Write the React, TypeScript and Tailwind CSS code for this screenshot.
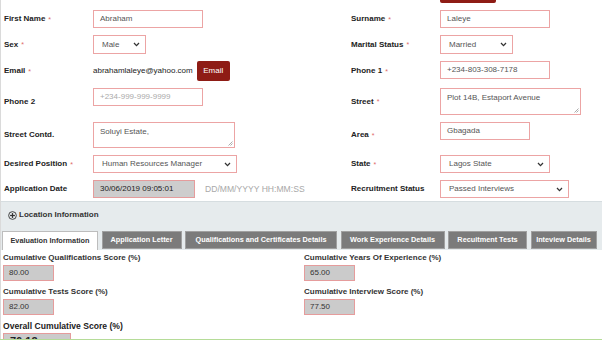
import type { ReactNode } from "react";

function Req() {
  return <span className="ml-[3px] text-[7px] font-normal text-[#e06a6a]">*</span>;
}

function Label({ text, req }: { text: string; req?: boolean }) {
  return (
    <div className="self-center flex items-center text-[8px] font-bold text-[#222] leading-none">
      {text}
      {req && <Req />}
    </div>
  );
}

function Chevron() {
  return (
    <svg width="7" height="5" viewBox="0 0 7 5" className="shrink-0">
      <polyline points="1,1 3.5,3.6 6,1" fill="none" stroke="#333" strokeWidth="1.3" />
    </svg>
  );
}

function Field({ w, h = "h-[18px]", children, muted }: { w: string; h?: string; children?: ReactNode; muted?: boolean }) {
  return (
    <div
      className={`self-start ${w} ${h} border border-[#eca4a4] bg-white flex items-center px-[6px] text-[8px] ${
        muted ? "text-[#aaa]" : "text-[#555]"
      }`}
    >
      {children}
    </div>
  );
}

function Select({ w, h = "h-[18px]", value }: { w: string; h?: string; value: string }) {
  return (
    <div
      className={`self-start ${w} ${h} border border-[#eca4a4] bg-white flex items-center justify-between pl-[8px] pr-[5px] text-[8px] text-[#555]`}
    >
      <span>{value}</span>
      <Chevron />
    </div>
  );
}

function TextArea({ w, h, value }: { w: string; h: string; value: string }) {
  return (
    <div className={`self-start relative ${w} ${h} border border-[#eca4a4] bg-white px-[6px] pt-[3px] text-[8px] text-[#555]`}>
      {value}
      <svg width="5" height="5" viewBox="0 0 5 5" className="absolute right-[1px] bottom-[1px]">
        <line x1="0.5" y1="4.5" x2="4.5" y2="0.5" stroke="#888" strokeWidth="0.7" />
        <line x1="2.5" y1="4.5" x2="4.5" y2="2.5" stroke="#888" strokeWidth="0.7" />
      </svg>
    </div>
  );
}

const tabs = [
  { name: "Evaluation Information", w: "w-[96px]", active: true },
  { name: "Application Letter", w: "w-[80px]" },
  { name: "Qualifications and Certificates Details", w: "w-[152px]" },
  { name: "Work Experience Details", w: "w-[104px]" },
  { name: "Recuitment Tests", w: "w-[79px]" },
  { name: "Inteview Details", w: "w-[66px]" },
];

function Score({ label, value }: { label: string; value: string }) {
  return (
    <div className="flex flex-col">
      <div className="h-[10px] flex items-center text-[8px] font-bold text-[#333]">{label}</div>
      <div className="mt-[2px] w-[51px] h-[16px] bg-[#cbcbcb] border border-[#e59c9c] flex items-center pl-[5px] text-[8px] text-[#333]">
        {value}
      </div>
    </div>
  );
}

export default function App() {
  return (
    <div className="min-h-screen bg-white border-l border-[#dadada] font-['Liberation_Sans',Arial,sans-serif] overflow-hidden">
      <div className="ml-[439px] w-[56px] h-[3px] bg-[#8e1c15] rounded-b-[2px]" />

      <div className="pt-[7px] pl-[3px] grid grid-cols-[89px_258px_89px_1fr] grid-rows-[18px_19px_20px_27px_26px_18px_18px] gap-y-[7px]">
        <Label text="First Name" req />
        <Field w="w-[110px]">Abraham</Field>
        <Label text="Surname" req />
        <Field w="w-[110px]">Laleye</Field>

        <Label text="Sex" req />
        <Select w="w-[53px]" h="h-[19px]" value="Male" />
        <Label text="Marital Status" req />
        <Select w="w-[73px]" h="h-[19px]" value="Married" />

        <Label text="Email" req />
        <div className="self-start flex items-center h-[20px] text-[8px] text-[#222]">
          abrahamlaleye@yahoo.com
          <div className="ml-[4px] h-[20px] w-[33px] rounded-[2px] bg-[#8e1c15] text-white flex items-center justify-center text-[8px]">
            Email
          </div>
        </div>
        <Label text="Phone 1" req />
        <Field w="w-[110px]">+234-803-308-7178</Field>

        <Label text="Phone 2" />
        <Field w="w-[110px]" muted>
          +234-999-999-9999
        </Field>
        <Label text="Street" req />
        <TextArea w="w-[141px]" h="h-[27px]" value="Plot 14B, Estaport Avenue" />

        <Label text="Street Contd." />
        <TextArea w="w-[142px]" h="h-[26px]" value="Soluyi Estate," />
        <Label text="Area" req />
        <Field w="w-[90px]" h="h-[18px]">Gbagada</Field>

        <Label text="Desired Position" req />
        <Select w="w-[144px]" value="Human Resources Manager" />
        <Label text="State" req />
        <Select w="w-[110px]" value="Lagos State" />

        <Label text="Application Date" />
        <div className="self-start flex items-center">
          <div className="w-[102px] h-[18px] bg-[#cdcdcd] border border-[#e59c9c] flex items-center px-[6px] text-[8px] text-[#222]">
            30/06/2019 09:05:01
          </div>
          <span className="ml-[10px] text-[8.6px] text-[#a9a9a9]">DD/MM/YYYY HH:MM:SS</span>
        </div>
        <Label text="Recruitment Status" />
        <Select w="w-[129px]" value="Passed Interviews" />
      </div>

      <div className="mt-[3px] bg-[#e6ebed] border-t border-[#d6dde0]">
        <div className="h-[26px] flex items-center pl-[7px] text-[8px] font-bold text-[#333]">
          <svg width="9" height="9" viewBox="0 0 10 10" className="mr-[2px]">
            <circle cx="5" cy="5" r="4.3" fill="none" stroke="#333" strokeWidth="1" />
            <line x1="5" y1="2.3" x2="5" y2="7.7" stroke="#333" strokeWidth="1.4" />
            <line x1="2.3" y1="5" x2="7.7" y2="5" stroke="#333" strokeWidth="1.4" />
          </svg>
          Location Information
        </div>
        <div className="mt-[3px] pl-[1px] flex gap-[3.5px] whitespace-nowrap">
          {tabs.map((t) =>
            t.active ? (
              <div
                key={t.name}
                className={`${t.w} h-[19px] shrink-0 bg-white border border-b-0 border-[#bdbdbd] flex items-center justify-center text-[7.3px] font-bold text-[#333]`}
              >
                {t.name}
              </div>
            ) : (
              <div
                key={t.name}
                className={`${t.w} h-[18px] shrink-0 bg-[#7b7b7b] border border-[#a0a0a0] flex items-center justify-center text-[7.3px] font-bold text-white`}
              >
                {t.name}
              </div>
            )
          )}
        </div>
      </div>

      <div className="pt-[3px] pl-[2px] grid grid-cols-[301px_1fr] gap-y-[6px]">
        <Score label="Cumulative Qualifications Score (%)" value="80.00" />
        <Score label="Cumulative Years Of Experience (%)" value="65.00" />
        <Score label="Cumulative Tests Score (%)" value="82.00" />
        <Score label="Cumulative Interview Score (%)" value="77.50" />
      </div>

      <div className="pl-[2px] mt-[5px]">
        <div className="h-[12px] flex items-center text-[8.6px] font-bold text-[#222]">Overall Cumulative Score (%)</div>
        <div className="mt-[1px] w-[68px] h-[20px] bg-[#cbcbcb] border border-[#e59c9c] pl-[6px] pt-[1px] text-[11px] leading-[12px] font-bold text-[#222]">
          76.12
        </div>
      </div>

      <div className="fixed left-0 right-0 bottom-0 h-[2px] bg-white border-t border-[#b5dc98]" />
    </div>
  );
}
